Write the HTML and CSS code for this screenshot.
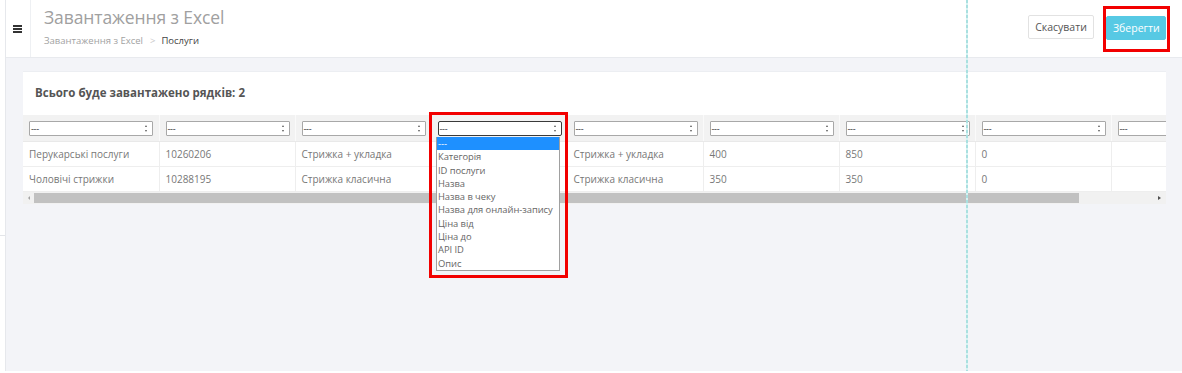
FILE: index.html
```html
<!DOCTYPE html>
<html lang="uk">
<head>
<meta charset="utf-8">
<title>Завантаження з Excel</title>
<link rel="stylesheet" href="styles.css">
</head>
<body>
<div class="app">
  <aside class="rail"><div class="rail-line"></div></aside>
  <div class="main">
    <header class="topbar">
      <div class="burger"><span></span><span></span><span></span></div>
      <div class="titles">
        <h1>Завантаження з Excel</h1>
        <nav class="crumbs"><span class="crumb-link">Завантаження з Excel</span><span class="sep">&gt;</span><span class="cur">Послуги</span></nav>
      </div>
      <div class="actions">
        <button class="btn btn-default">Скасувати</button>
        <span class="hl-wrap"><button class="btn btn-primary">Зберегти</button><span class="hl-save"></span></span>
      </div>
    </header>
    <main class="content">
      <section class="panel">
        <h2>Всього буде завантажено рядків: 2</h2>
        <div class="table-wrap">
          <table class="grid">
            <thead>
              <tr>
                <th><div class="sel"><span>---</span><i class="arr"></i></div></th>
                <th><div class="sel"><span>---</span><i class="arr"></i></div></th>
                <th><div class="sel"><span>---</span><i class="arr"></i></div></th>
                <th><div class="sel sel-focus"><span>---</span><i class="arr"></i></div></th>
                <th><div class="sel"><span>---</span><i class="arr"></i></div></th>
                <th><div class="sel"><span>---</span><i class="arr"></i></div></th>
                <th><div class="sel"><span>---</span><i class="arr"></i></div></th>
                <th><div class="sel"><span>---</span><i class="arr"></i></div></th>
                <th><div class="sel"><span>---</span><i class="arr"></i></div></th>
              </tr>
            </thead>
            <tbody>
              <tr>
                <td>Перукарські послуги</td>
                <td>10260206</td>
                <td>Стрижка + укладка</td>
                <td></td>
                <td>Стрижка + укладка</td>
                <td>400</td>
                <td>850</td>
                <td>0</td>
                <td></td>
              </tr>
              <tr>
                <td>Чоловічі стрижки</td>
                <td>10288195</td>
                <td>Стрижка класична</td>
                <td></td>
                <td>Стрижка класична</td>
                <td>350</td>
                <td>350</td>
                <td>0</td>
                <td></td>
              </tr>
            </tbody>
          </table>
        </div>
        <div class="hscroll">
          <i class="sb-left"></i>
          <div class="sb-thumb"></div>
          <i class="sb-right"></i>
        </div>
        <ul class="dropdown">
          <li class="active">---</li>
          <li>Категорія</li>
          <li>ID послуги</li>
          <li>Назва</li>
          <li>Назва в чеку</li>
          <li>Назва для онлайн-запису</li>
          <li>Ціна від</li>
          <li>Ціна до</li>
          <li>API ID</li>
          <li>Опис</li>
        </ul>
        <span class="hl-drop"></span>
      </section>
    </main>
  </div>
  <div class="guide"></div>
</div>
</body>
</html>
```

FILE: styles.css
```css
* { box-sizing: border-box; }
html, body { margin: 0; padding: 0; background: #fff; }
body { font-family: "Open Sans", "Noto Sans", sans-serif; color: #555; }

.app {
  position: relative;
  display: flex;
  height: 371px;
  overflow: hidden;
}

.rail {
  width: 6px;
  flex: none;
  background: #fff;
  border-right: 1px solid #e6e8ec;
  padding-top: 235px;
}
.rail-line { height: 1px; background: #e3e5e9; }

.main { flex: 1; display: flex; flex-direction: column; min-width: 0; }

.topbar {
  height: 58px;
  flex: none;
  display: flex;
  align-items: stretch;
  background: #fff;
  border-bottom: 1px solid #e8eaee;
}
.burger {
  width: 25px;
  border-right: 1px solid #eef0f3;
  display: flex;
  flex-direction: column;
  justify-content: center;
  align-items: center;
  gap: 1px;
  padding-right: 2px;
}
.burger span { display: block; width: 9px; height: 2px; background: #333; }

.titles { padding-left: 13px; padding-top: 5px; }
.titles h1 {
  margin: 0;
  font-size: 17.5px;
  font-weight: 400;
  color: #a0a0a0;
  line-height: 24px;
  letter-spacing: -0.1px;
}
.crumbs { margin-top: 5px; font-size: 9.5px; line-height: 14px; }
.crumb-link { color: #a2a2a2; }
.sep { color: #c8c8c8; margin: 0 6px 0 7px; }
.cur { color: #444; }

.actions {
  margin-left: auto;
  padding: 15px 16px 0 0;
  display: flex;
  align-items: flex-start;
  gap: 12px;
}
.btn {
  font-family: inherit;
  font-size: 10.5px;
  height: 24px;
  padding: 0 6px;
  border-radius: 2px;
  cursor: pointer;
}
.btn-default { background: #fff; border: 1px solid #e2e2e2; color: #555; width: 66px; }
.btn-primary { background: #57c9e4; border: 1px solid #57c9e4; color: #fff; width: 60px; }
.hl-wrap { position: relative; display: block; }
.hl-save {
  position: absolute;
  left: -3px; top: -9px; right: -4px; bottom: -12px;
  border: 3px solid #f20000;
  pointer-events: none;
}

.content {
  flex: 1;
  background: #f3f4f8;
  padding: 13px 16px 0 17px;
}

.panel {
  position: relative;
  background: #fff;
  border-top: 1px solid #eceef2;
}
.panel h2 {
  margin: 0;
  height: 43px;
  line-height: 42px;
  padding-left: 12px;
  font-size: 11.5px;
  font-weight: 700;
  color: #555;
}

.table-wrap { overflow: hidden; }
.grid {
  border-collapse: collapse;
  table-layout: fixed;
  width: 1224px;
}
.grid th, .grid td { width: 136px; }
.grid th {
  background: #f2f2f2;
  height: 26px;
  padding: 6px 6px 4px 6px;
  border-right: 1px solid #fafafa;
  border-bottom: 1px solid #e9e9e9;
  text-align: left;
  vertical-align: top;
  font-weight: 400;
}
.grid td {
  height: 25px;
  padding: 0 6px;
  font-size: 10px;
  color: #777;
  border-right: 1px solid #eeeeee;
  border-bottom: 1px solid #eeeeee;
  white-space: nowrap;
}

.sel {
  display: flex;
  align-items: center;
  justify-content: space-between;
  width: 124px;
  height: 15px;
  border: 1px solid #a8a8a8;
  border-radius: 1px;
  background: #fff;
  padding: 0 4px 0 1px;
  font-size: 9px;
  color: #333;
  line-height: 13px;
  letter-spacing: -0.3px;
}
.sel-focus { border-color: #3a3a3a; border-radius: 2px; }
.arr { position: relative; width: 3px; height: 7px; }
.arr::before, .arr::after {
  content: "";
  position: absolute;
  left: 0;
  border-left: 1.5px solid transparent;
  border-right: 1.5px solid transparent;
}
.arr::before { top: 0; border-bottom: 2.5px solid #555; }
.arr::after { bottom: 0; border-top: 2.5px solid #555; }

/* open native-like dropdown list of column 4, overlaying the table */
.dropdown {
  position: absolute;
  left: 413px;
  top: 65px;
  width: 124px;
  height: 134px;
  margin: 0;
  padding: 0;
  list-style: none;
  background: #fff;
  border: 1px solid #a0a0a0;
  border-top: none;
  z-index: 5;
}
.dropdown li {
  height: 13.3px;
  line-height: 13.3px;
  font-size: 9.4px;
  color: #666;
  padding-left: 1px;
  white-space: nowrap;
  letter-spacing: -0.05px;
}
.dropdown li.active { background: #1e90ff; color: #fff; }
.hl-drop {
  position: absolute;
  left: 406px;
  top: 40px;
  width: 139px;
  height: 166px;
  border: 3px solid #f20000;
  z-index: 6;
  pointer-events: none;
}

.hscroll {
  position: relative;
  height: 12px;
  background: #f1f1f1;
  display: flex;
  align-items: center;
  padding: 0 5px 0 5px;
}
.sb-left {
  width: 0; height: 0;
  border-top: 2px solid transparent;
  border-bottom: 2px solid transparent;
  border-right: 2.5px solid #a3a3a3;
}
.sb-thumb {
  margin-left: 4px;
  width: 1045px;
  height: 10px;
  background: #c1c1c1;
}
.sb-right {
  margin-left: auto;
  width: 0; height: 0;
  border-top: 2.5px solid transparent;
  border-bottom: 2.5px solid transparent;
  border-left: 3px solid #505050;
}

.guide {
  position: absolute;
  left: 966px;
  top: 0;
  bottom: -2px;
  width: 2px;
  background: repeating-linear-gradient(to bottom, #a9e0e0 0 3px, #d6f2f2 3px 5px);
  z-index: 10;
  pointer-events: none;
}
```
